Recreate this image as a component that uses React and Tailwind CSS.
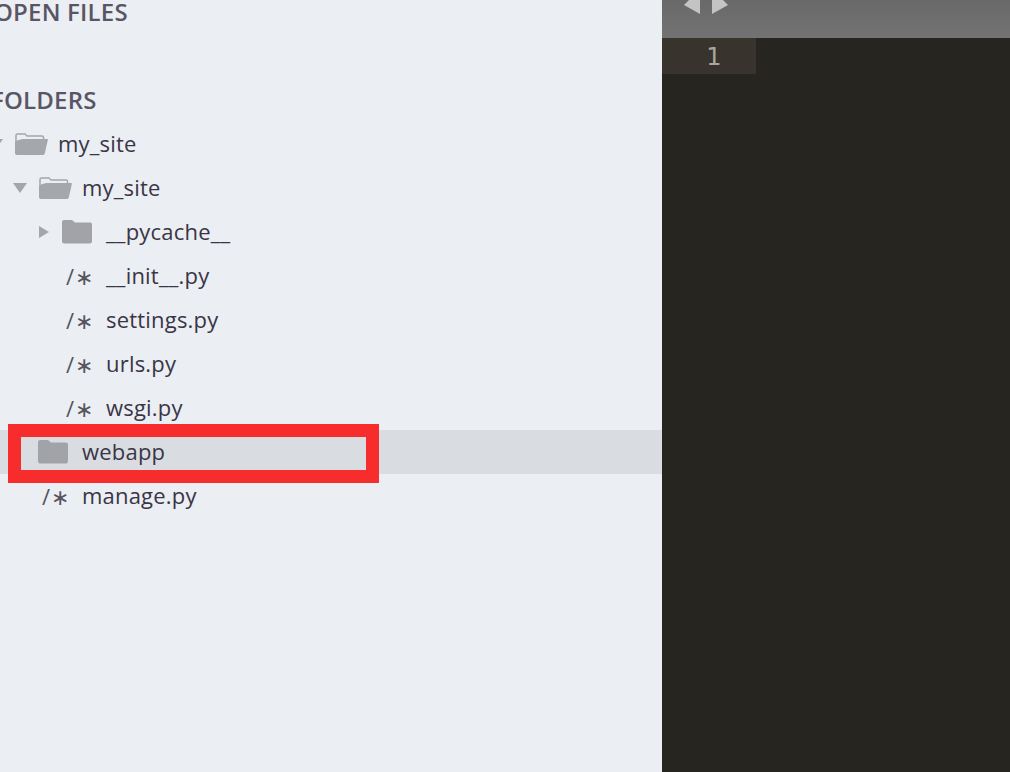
import React from "react";

const tree = [
  { name: "my_site", type: "open", arrow: "down", indent: "pl-0" },
  { name: "my_site", type: "open", arrow: "down", indent: "pl-[24px]" },
  { name: "__pycache__", type: "closed", arrow: "right", indent: "pl-[48px]" },
  { name: "__init__.py", type: "file", indent: "pl-[48px]" },
  { name: "settings.py", type: "file", indent: "pl-[48px]" },
  { name: "urls.py", type: "file", indent: "pl-[48px]" },
  { name: "wsgi.py", type: "file", indent: "pl-[48px]" },
  { name: "webapp", type: "closed", indent: "pl-[24px]", selected: true },
  { name: "manage.py", type: "file", indent: "pl-[24px]" },
];

const FolderOpen = () => (
  <svg width="34" height="24" viewBox="0 0 34 24">
    <path d="M2 19V3.500C2 2.500 2.600 2 3.500 2H11l2 2h15c1 0 1.500.5 1.500 1.500V8" fill="none" stroke="#a4a7ac" strokeWidth="1.500" />
    <path d="M1 9.500C5 7.500 8 7 11 7h22c.8 0 1 .5.8 1.200l-3 13c-.3 1.200-1 1.800-2.300 1.800H3c-1.300 0-2-.7-2-2z" fill="#a4a7ac" />
  </svg>
);

const FolderClosed = () => (
  <svg width="30" height="24" viewBox="0 0 30 24">
    <path d="M0 2.500C0 1 .8 0 2 0h8l3 2.500h15c1.300 0 2 .7 2 2V21c0 1.500-.8 2.500-2 2.500H2c-1.300 0-2-1-2-2.500z" fill="#a1a3a8" />
  </svg>
);

const Arrow = ({ dir }) => (
  <svg width="14" height="14" viewBox="0 0 14 14">
    {dir === "down" ? (
      <path d="M0 2h14L7 12z" fill="#a3a6ab" />
    ) : (
      <path d="M2 1l10 6-10 6z" fill="#a3a6ab" />
    )}
  </svg>
);

const Row = ({ item }) => (
  <div className={`flex h-[44px] items-center ${item.indent} ${item.selected ? "bg-[#d9dde2]" : ""}`}>
    <div className="flex w-[30px] shrink-0 items-center justify-center pr-[6px]">
      {item.arrow && <Arrow dir={item.arrow} />}
    </div>
    <div className="w-[44px] shrink-0">
      {item.type === "open" && <FolderOpen />}
      {item.type === "closed" && <FolderClosed />}
      {item.type === "file" && (
        <span className="pl-[4px] text-[22px] tracking-[0.5px] text-[#55555f]">/∗</span>
      )}
    </div>
    <span className="pb-[2px] text-[22px] tracking-[0.2px] text-[#3a3546]">{item.name}</span>
  </div>
);

const App = () => {
  return (
    <div className="relative flex h-[772px] w-[1010px] overflow-hidden font-['Open_Sans',sans-serif]">
      <aside className="-mt-[10px] w-[662px] shrink-0 overflow-hidden bg-[#ebeef2]">
        <div className="-ml-[6px] flex h-[44px] items-center text-[24px] font-semibold tracking-[0.2px] text-[#585666]">OPEN FILES</div>
        <div className="h-[44px]"></div>
        <div className="-ml-[9px] flex h-[44px] items-center text-[24px] font-semibold tracking-[0.2px] text-[#585666]">FOLDERS</div>
        <div className="-ml-[16px]">
          {tree.map((item, i) => (
            <Row key={i} item={item} />
          ))}
        </div>
      </aside>

      <main className="flex-1 bg-[#26251f]">
        <div className="flex h-[38px] items-start gap-[12px] bg-gradient-to-b from-[#696969] to-[#737373] pl-[22px]">
          <svg width="16" height="14" viewBox="0 0 16 14">
            <path d="M16 0v14L0 5l5-5z" fill="#c4c4c4" />
          </svg>
          <svg width="16" height="14" viewBox="0 0 16 14">
            <path d="M0 0v14L16 5l-5-5z" fill="#c4c4c4" />
          </svg>
        </div>
        <div className="flex h-[36px] w-[94px] items-center justify-center bg-[#38342d] pl-[10px] pt-[2px] font-['DejaVu_Sans',sans-serif] text-[24px] text-[#a8a69f]">1</div>
      </main>

      <div className="absolute left-[8px] top-[424px] h-[59px] w-[371px] border-[13px] border-[#f72c2c]"></div>
    </div>
  );
};

export default App;
